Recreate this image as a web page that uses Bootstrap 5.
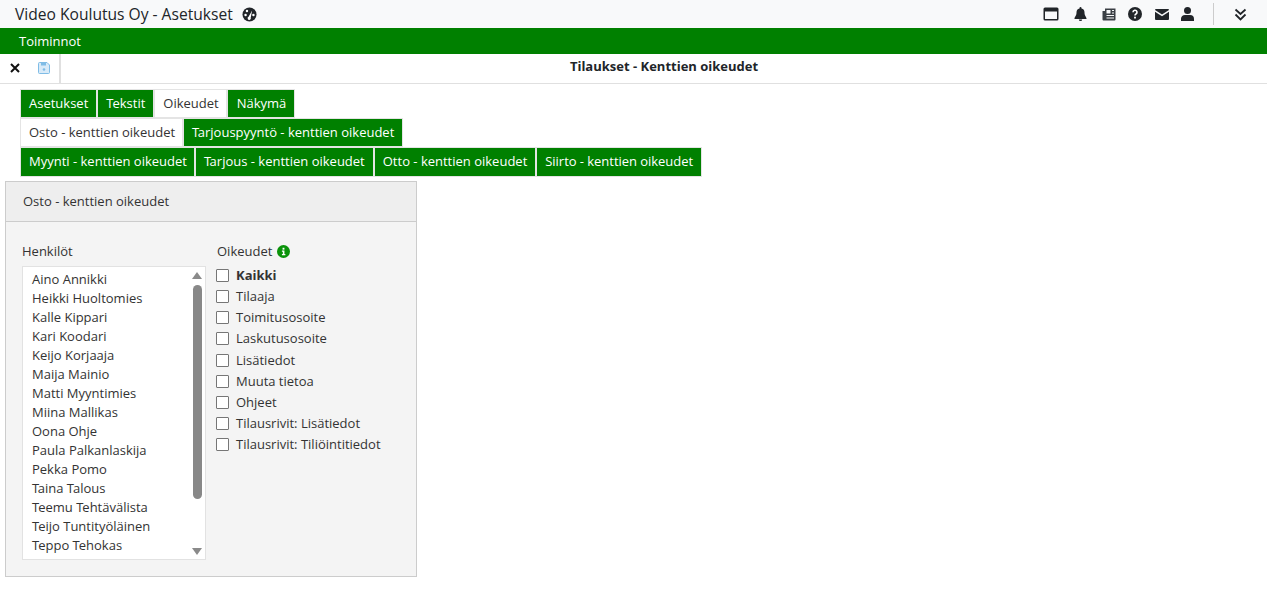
<!DOCTYPE html>
<html lang="fi">
<head>
<meta charset="utf-8">
<title>Asetukset</title>
<link href="https://cdn.jsdelivr.net/npm/bootstrap@5.3.0/dist/css/bootstrap.min.css" rel="stylesheet">
<style>
html,body{height:608px;overflow:hidden}
body{font-family:"Open Sans",sans-serif;font-size:13px;color:#212529;background:#fff;font-kerning:normal;text-rendering:optimizeLegibility}
.kt{letter-spacing:-1px}
.kw{letter-spacing:-1.5px}
.tight{letter-spacing:-.04px}
.topbar{height:28px;background:#f8f9fa}
.apptitle{font-size:15.6px;line-height:28px;margin-left:15px;color:#212529}
.gauge{margin-left:9px}
.topicons{margin-right:20px}
.ic-a{margin-right:15px}
.ic-b{margin-right:12px}
.ic-c{margin-right:13px}
.sep{width:1px;height:22px;background:#ccc;margin:0 20px 0 19px}
.menubar{height:26px;background:#008000;color:#fff;padding-left:19px;line-height:26px}
.toolbar{height:30px;border-bottom:1px solid #e0e0e0}
.toolbtns{width:61px;border-right:2px solid #e0e0e0;padding:0 0 1px 10px;height:100%}
.pagetitle{font-weight:700;font-size:13px;line-height:25px}
.savebtn{margin-left:18px}
.tabarea{padding:5px 0 0 20px}
.tabitem{border:1px solid #e4e4e4;background:#008000;color:#fff;height:29px;line-height:27px;padding:0 8px;white-space:nowrap}
.tabitem.on{background:#fff;color:#333}
.tabitem.trim{padding-right:7px}
.tabitem.padl{padding-left:9px}
.tallrow .tabitem{height:30px}
.panel{width:412px;height:396px;margin:4px 0 0 5px;border:1px solid #ccc;background:#f4f4f4}
.panelhead{height:40px;line-height:38px;padding-left:17px;background:#eee;border-bottom:1px solid #ccc;color:#333}
.panelbody{padding:19px 0 0 16px;color:#333}
.collist{width:184px}
.lbl{height:20px;line-height:20px;margin-bottom:5px}
.lblr{margin-bottom:3.8px;padding-left:1px}
.listbox{width:184px;height:294px;background:#fff;border:1px solid #e2e2e2}
.names{padding:3px 0 0 9px;line-height:19px;color:#333;white-space:nowrap;flex:1 1 auto;overflow:hidden}
.scroller{width:12px;margin-right:2px;padding:3px 0}
.arrowup{width:0;height:0;border-left:5px solid transparent;border-right:5px solid transparent;border-bottom:7px solid #8a8a8a;margin-top:2px}
.arrowdn{width:0;height:0;border-left:5px solid transparent;border-right:5px solid transparent;border-top:7px solid #8a8a8a;margin-bottom:1px}
.thumb{width:9px;height:214px;background:#888;border-radius:5px;margin:6px 0 auto}
.colright{margin-left:10px}
.chk{height:21.2px;line-height:21px;white-space:nowrap}
.box{width:13px;height:13px;border:1px solid #767676;background:#fff;border-radius:1px;margin-right:7px;flex:0 0 auto}
.infodot{width:13px;height:13px;margin-left:5px}
</style>
</head>
<body>
<div class="topbar d-flex align-items-center">
  <span class="apptitle">Video Koulutus Oy - Asetukset</span>
  <svg class="gauge" width="15" height="15" viewBox="0 0 16 16"><circle cx="8" cy="8" r="7.500" fill="#212529"/><circle cx="3.800" cy="8.500" r="1.300" fill="#fff"/><circle cx="5.300" cy="4.300" r="1.300" fill="#fff"/><circle cx="12.200" cy="8.500" r="1.300" fill="#fff"/><path d="M10.800 3.800 7 10.500a1.700 1.700 0 1 0 2.300.9z" fill="#fff"/></svg>
  <div class="ms-auto d-flex align-items-center topicons">
    <svg class="ic-a" width="16" height="14" viewBox="0 0 16 14"><rect x=".5" y=".5" width="15" height="13" rx="1.500" fill="#212529"/><rect x="2" y="4.500" width="12" height="7.500" fill="#f8f9fa"/></svg>
    <svg class="ic-a" width="13" height="14" viewBox="0 0 13 14"><path d="M6.500 0a1 1 0 0 1 1 1v.6A4 4 0 0 1 10.500 5.500c0 3.500 2 4.500 2 6v.5H.5v-.5c0-1.500 2-2.500 2-6A4 4 0 0 1 5.500 1.600V1a1 1 0 0 1 1-1zM4.800 12.500h3.400a1.700 1.500 0 0 1-3.400 0z" fill="#212529"/></svg>
    <svg class="ic-b" width="14" height="13" viewBox="0 0 14 13"><path d="M3 .5h10.500v11a1 1 0 0 1-1 1H1.500a1 1 0 0 1-1-1V3H3z" fill="#3a3f44"/><rect x="4.500" y="2" width="4" height="3.500" fill="#f8f9fa"/><path d="M10 2.500h2M10 5h2M4.500 7.500h7.500M4.500 10h7.500" stroke="#f8f9fa" stroke-width="1"/></svg>
    <svg class="ic-c" width="14" height="14" viewBox="0 0 14 14"><circle cx="7" cy="7" r="7" fill="#212529"/><path d="M5 5.300a2 2 0 1 1 3 1.700c-.7.400-1 .7-1 1.500" fill="none" stroke="#fff" stroke-width="1.600"/><rect x="6.100" y="9.700" width="1.800" height="1.800" fill="#fff"/></svg>
    <svg class="ic-b" width="14" height="11" viewBox="0 0 14 11"><path d="M1 0h12a1 1 0 0 1 1 1L7 5.500 0 1a1 1 0 0 1 1-1z" fill="#212529"/><path d="M0 2.700 7 7.200l7-4.500V10a1 1 0 0 1-1 1H1a1 1 0 0 1-1-1z" fill="#212529"/></svg>
    <svg width="13" height="14" viewBox="0 0 13 14"><circle cx="6.500" cy="3.600" r="3.500" fill="#212529"/><path d="M0 14v-2.500A4 4 0 0 1 4 8h5a4 4 0 0 1 4 4V14z" fill="#212529"/></svg>
    <span class="sep"></span>
    <svg width="13" height="13" viewBox="0 0 13 13" fill="none" stroke="#212529" stroke-width="1.800"><path d="M1.500 1.500 6.500 6l5-4.500M1.500 6.500l5 5 5-5"/></svg>
  </div>
</div>
<div class="menubar">Toiminnot</div>
<div class="toolbar d-flex">
  <div class="toolbtns d-flex align-items-center">
    <svg width="10" height="10" viewBox="0 0 10 10"><path d="M1 1l8 8M9 1 1 9" stroke="#111" stroke-width="2"/></svg>
    <svg class="savebtn" width="12" height="12" viewBox="0 0 12 12"><path d="M1.500.5h7.500l2.500 2.500v7.500a1 1 0 0 1-1 1h-9a1 1 0 0 1-1-1v-9a1 1 0 0 1 1-1z" fill="#d8eaf8" stroke="#7fbce6"/><rect x="3" y="1" width="5" height="2.500" fill="#7fbce6"/><circle cx="6" cy="7.500" r="1.300" fill="#7fbce6"/></svg>
  </div>
  <div class="pagetitle flex-grow-1 text-center">Tilaukset - Kenttien oikeudet</div>
</div>
<div class="tabarea">
  <div class="d-flex"><span class="tabitem">Asetukset</span><span class="tabitem"><span class="kt">T</span>ekstit</span><span class="tabitem on trim">Oikeudet</span><span class="tabitem padl">Näkymä</span></div>
  <div class="d-flex"><span class="tabitem on trim">Osto - kenttien oikeudet</span><span class="tabitem"><span class="kw">T</span>arjouspyyntö - kenttien oikeudet</span></div>
  <div class="d-flex tallrow"><span class="tabitem trim">Myynti - kenttien oikeudet</span><span class="tabitem"><span class="kw">T</span>arjous - kenttien oikeudet</span><span class="tabitem">Otto - kenttien oikeudet</span><span class="tabitem tight">Siirto - kenttien oikeudet</span></div>
</div>
<div class="panel">
  <div class="panelhead">Osto - kenttien oikeudet</div>
  <div class="panelbody d-flex">
    <div class="collist">
      <div class="lbl">Henkilöt</div>
      <div class="listbox d-flex">
        <div class="names">
          <div>Aino Annikki</div><div>Heikki Huoltomies</div><div>Kalle Kippari</div><div>Kari Koodari</div><div>Keijo Korjaaja</div><div>Maija Mainio</div><div>Matti Myyntimies</div><div>Miina Mallikas</div><div>Oona Ohje</div><div>Paula Palkanlaskija</div><div>Pekka Pomo</div><div><span class="kw">T</span>aina <span class="kt">T</span>alous</div><div><span class="kt">T</span>eemu <span class="kt">T</span>ehtävälista</div><div><span class="kt">T</span>eijo Tuntityöläinen</div><div><span class="kt">T</span>eppo <span class="kt">T</span>ehokas</div>
        </div>
        <div class="scroller d-flex flex-column align-items-center"><div class="arrowup"></div><div class="thumb"></div><div class="arrowdn"></div></div>
      </div>
    </div>
    <div class="colright">
      <div class="lbl lblr d-flex align-items-center">Oikeudet<svg class="infodot" viewBox="0 0 14 14"><circle cx="7" cy="7" r="7" fill="#0a930a"/><rect x="6" y="3" width="2" height="2" fill="#fff"/><path d="M5.300 6h2.700v3.700h1V11H5.300V9.700h1V7.200h-1z" fill="#fff"/></svg></div>
      <div class="chk d-flex align-items-center"><span class="box"></span><b>Kaikki</b></div>
      <div class="chk d-flex align-items-center"><span class="box"></span>Tilaaja</div>
      <div class="chk d-flex align-items-center"><span class="box"></span>Toimitusosoite</div>
      <div class="chk d-flex align-items-center"><span class="box"></span>Laskutusosoite</div>
      <div class="chk d-flex align-items-center"><span class="box"></span>Lisätiedot</div>
      <div class="chk d-flex align-items-center"><span class="box"></span>Muuta tietoa</div>
      <div class="chk d-flex align-items-center"><span class="box"></span>Ohjeet</div>
      <div class="chk d-flex align-items-center"><span class="box"></span>Tilausrivit: Lisätiedot</div>
      <div class="chk d-flex align-items-center"><span class="box"></span>Tilausrivit: Tiliöintitiedot</div>
    </div>
  </div>
</div>
<script src="https://cdn.jsdelivr.net/npm/bootstrap@5.3.0/dist/js/bootstrap.bundle.min.js"></script>
</body>
</html>
